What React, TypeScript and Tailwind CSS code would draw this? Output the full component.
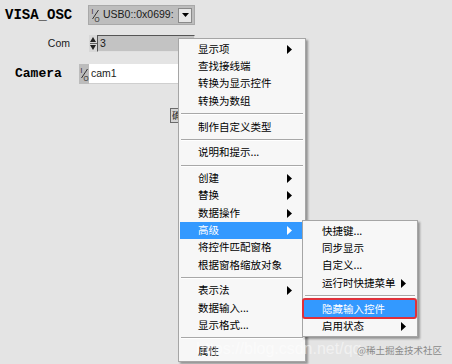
import React from "react";

type Item = { label: string; arrow?: boolean; active?: boolean } | "sep";

const mainMenu: Item[] = [
  { label: "显示项", arrow: true },
  { label: "查找接线端" },
  { label: "转换为显示控件" },
  { label: "转换为数组" },
  "sep",
  { label: "制作自定义类型" },
  "sep",
  { label: "说明和提示..." },
  "sep",
  { label: "创建", arrow: true },
  { label: "替换", arrow: true },
  { label: "数据操作", arrow: true },
  { label: "高级", arrow: true, active: true },
  { label: "将控件匹配窗格" },
  { label: "根据窗格缩放对象" },
  "sep",
  { label: "表示法", arrow: true },
  { label: "数据输入..." },
  { label: "显示格式..." },
  "sep",
  { label: "属性" },
];

const subMenu: Item[] = [
  { label: "快捷键..." },
  { label: "同步显示" },
  { label: "自定义..." },
  { label: "运行时快捷菜单", arrow: true },
  "sep",
  { label: "隐藏输入控件", active: true },
  { label: "启用状态", arrow: true },
];

function Arrow({ white }: { white?: boolean }) {
  return (
    <svg width="5" height="9" viewBox="0 0 5 9" className="shrink-0">
      <polygon points="0,0 5,4.5 0,9" fill={white ? "#ffffff" : "#000000"} />
    </svg>
  );
}

function IoIcon() {
  return (
    <svg width="9" height="14" viewBox="0 0 9 14" className="shrink-0">
      <text x="0.5" y="6" fontSize="6.5" fontFamily="Liberation Sans, sans-serif" fill="#222">I</text>
      <line x1="7.5" y1="2" x2="1.5" y2="11" stroke="#222" strokeWidth="0.9" />
      <text x="3.5" y="13.5" fontSize="6.5" fontFamily="Liberation Sans, sans-serif" fill="#222">O</text>
    </svg>
  );
}

function Menu({ items, arrowRight, className, redBox }: { items: Item[]; arrowRight: string; className: string; redBox?: boolean }) {
  return (
    <div
      className={`absolute bg-[#f7f7f7] border border-[#a5a5a5] shadow-[2px_2px_2px_rgba(0,0,0,0.35)] py-[1.5px] font-['Noto_Sans_CJK_SC',sans-serif] text-[10.5px] text-black ${className}`}
    >
      {items.map((it, i) =>
        it === "sep" ? (
          <div key={i} className="h-[8.5px] flex flex-col justify-center px-[2px]">
            <div className="h-px bg-[#a8a8a8]" />
            <div className="h-px bg-white" />
          </div>
        ) : (
          <div
            key={i}
            className={`relative h-[17.3px] flex items-center justify-between pl-[18px] mx-[1px] ${arrowRight} ${
              it.active ? "bg-[#3399ff] text-white" : ""
            }`}
          >
            <span className="leading-none">{it.label}</span>
            {it.arrow && <Arrow white={it.active} />}
            {it.active && redBox && (
              <div className="absolute -left-[2px] -right-[1px] -top-[2px] -bottom-[2px] border-[2.5px] border-[#e0303a] rounded-[3px]" />
            )}
          </div>
        )
      )}
    </div>
  );
}

export default function App() {
  return (
    <div className="relative w-[452px] h-[364px] bg-[#e4e4e4] overflow-hidden">
      <div className="flex flex-col pt-[5px] font-['Liberation_Sans',sans-serif] text-[10.5px] text-[#1a1a1a]">
        {/* VISA_OSC */}
        <div className="flex items-center h-[20px]">
          <div className="w-[88px] pl-[5px] font-['Liberation_Mono',monospace] font-bold text-[14px] text-black">VISA_OSC</div>
          <div className="w-[107px] h-[20px] bg-[#bdbdbd] border border-[#a9a9a9] flex items-center pl-[2px] pr-[2px]">
            <IoIcon />
            <span className="ml-[3px] flex-1">USB0::0x0699:</span>
            <div className="w-[14px] h-[15px] bg-[#e6e6e6] border border-[#8a8a8a] flex items-center justify-center">
              <svg width="7" height="4" viewBox="0 0 7 4">
                <polygon points="0,0 7,0 3.5,4" fill="#000" />
              </svg>
            </div>
          </div>
        </div>

        {/* Com */}
        <div className="flex items-center h-[17px] mt-[10px]">
          <div className="w-[70px] text-right">Com</div>
          <div className="ml-[19px] w-[8px] h-[17px] flex flex-col items-center justify-center gap-[1px] bg-[#d8d8d8]">
            <svg width="6" height="5" viewBox="0 0 6 5">
              <polygon points="3,0 6,5 0,5" fill="#222" />
            </svg>
            <div className="w-[7px] h-px bg-[#666]" />
            <svg width="6" height="5" viewBox="0 0 6 5">
              <polygon points="0,0 6,0 3,5" fill="#222" />
            </svg>
          </div>
          <div className="w-[98px] h-[17px] bg-[#c3c3c3] border-t border-l border-[#555] border-r border-b border-r-[#e0e0e0] border-b-[#e0e0e0] flex items-center pl-[2px]">
            3
          </div>
        </div>

        {/* Camera */}
        <div className="flex items-center h-[20px] mt-[12px]">
          <div className="w-[79px] pl-[15px] font-['Liberation_Mono',monospace] font-bold text-[13px] text-black">Camera</div>
          <div className="w-[112px] h-[20px] bg-white border-b border-[#cfcfcf] flex items-center">
            <div className="w-[10px] h-[20px] bg-[#bcbcbc] flex items-center justify-center">
              <IoIcon />
            </div>
            <span className="ml-[2px]">cam1</span>
          </div>
        </div>

        {/* small button */}
        <div className="ml-[170px] mt-[24px] w-[14px] h-[15px] bg-[#d4d4d4] border border-[#6a6a6a] text-[9px] flex items-center pl-[1px] font-['Noto_Sans_CJK_SC',sans-serif]">
          确
        </div>
      </div>

      <Menu items={mainMenu} arrowRight="pr-[12px]" className="left-[178px] top-[38px] w-[128px]" />
      <Menu items={subMenu} arrowRight="pr-[10px]" className="left-[302px] top-[220px] w-[116px]" redBox />

      {/* watermark */}
      <div className="absolute left-[196px] top-[337px] font-['Liberation_Sans',sans-serif] text-[16px] text-white/50 whitespace-nowrap">
        https://blog.csdn.net/qq
      </div>
      <div className="absolute left-[357px] top-[343px] font-['Noto_Sans_CJK_SC',sans-serif] text-[9.5px] text-[#8a8a8a] whitespace-nowrap">
        @稀土掘金技术社区
      </div>
    </div>
  );
}
